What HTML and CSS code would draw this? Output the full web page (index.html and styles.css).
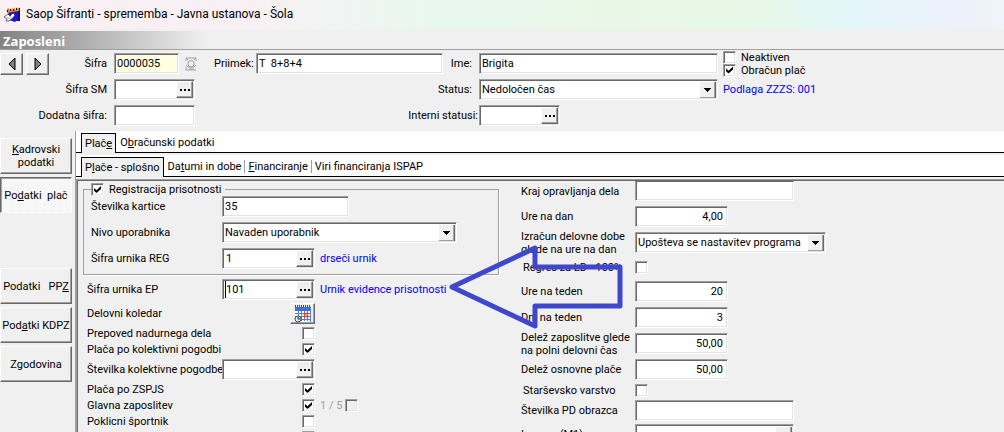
FILE: index.html
```html
<!DOCTYPE html>
<html lang="sl">
<head>
<meta charset="utf-8">
<title>Saop Šifranti - sprememba - Javna ustanova - Šola</title>
<link rel="stylesheet" href="styles.css">
</head>
<body>
<header class="titlebar">
  <svg class="app-icon" viewBox="0 0 16 16" aria-hidden="true">
    <path d="M4 4L15 3V14H12L11 15L5 13Z" fill="#1414e6"/>
    <path d="M3 4V2L5 1V3L7 1V3L9 1V3L11 0V3L13 0V2L15 0V4L3 6Z" fill="#e08a28"/>
    <path d="M3 3H4V5H3ZM6 2H7V4H6ZM9 2H10V4H9ZM12 1H13V3H12ZM15 1H16V14H14V4H15Z" fill="#181040"/>
    <path d="M0 10L4 7L6 9L9 6L11 8L9 11L5 14L2 14L3 12Z" fill="#fff" stroke="#223" stroke-width=".7"/>
    <path d="M3 10L6 12M5 9L8 11" stroke="#889" stroke-width=".7"/>
  </svg>
  <span>Saop Šifranti - sprememba - Javna ustanova - Šola</span>
</header>
<h1 class="band">Zaposleni</h1>

<form class="person">
  <div class="cell lead">
    <span class="nav">
      <button type="button" class="btn" aria-label="Prejšnji"><svg viewBox="0 0 18 18"><path d="M12 3V15L6 9Z" fill="#808080" stroke="#000"/></svg></button>
      <button type="button" class="btn" aria-label="Naslednji"><svg viewBox="0 0 18 18"><path d="M6 3V15L12 9Z" fill="#808080" stroke="#000"/></svg></button>
    </span>
    <label for="sifra">Šifra</label>
  </div>
  <div class="cell">
    <input id="sifra" class="field code" value="0000035">
  </div>
  <div class="cell surname">
    <svg class="stamp" viewBox="0 0 12 14" aria-hidden="true"><path d="M1 4V1H11V4M1 1L3 3M11 1L9 3M4 4H8L9 6V8L7 10H5L3 8V6ZM1 8L3 10H9L11 8M1 13H11M1 10V13M4 12H9" fill="none" stroke="#a0a0a0"/></svg>
    <label for="priimek">Priimek:</label>
    <input id="priimek" class="field grow" value="T  8+8+4">
  </div>
  <div class="cell end"><label for="ime">Ime:</label></div>
  <div class="cell"><input id="ime" class="field grow" value="Brigita"></div>
  <div class="cell flags">
    <label class="check"><input type="checkbox">Neaktiven</label>
    <label class="check"><input type="checkbox" checked>Obračun plač</label>
  </div>

  <div class="cell end"><label for="sm">Šifra SM</label></div>
  <div class="cell"><span class="field combo grow"><input id="sm"><button type="button" class="btn dots" aria-label="Izberi"></button></span></div>
  <div class="cell"></div>
  <div class="cell end"><label for="status">Status:</label></div>
  <div class="cell"><select id="status" class="field grow"><option>Nedoločen čas</option></select></div>
  <div class="cell info">Podlaga ZZZS: 001</div>

  <div class="cell end"><label for="dodatna">Dodatna šifra:</label></div>
  <div class="cell"><input id="dodatna" class="field grow"></div>
  <div class="cell"></div>
  <div class="cell end wide"><label for="interni">Interni statusi:</label></div>
  <div class="cell"><span class="field combo short"><input id="interni"><button type="button" class="btn dots" aria-label="Izberi"></button></span></div>
  <div class="cell"></div>
</form>

<div class="work">
  <nav class="side">
    <button type="button" class="btn"><span><u>K</u>adrovski<br>podatki</span></button>
    <button type="button" class="btn pressed"><span>Po<u>d</u>atki&nbsp; plač</span></button>
    <button type="button" class="btn after-gap"><span>Podatki &nbsp; PP<u>Z</u></span></button>
    <button type="button" class="btn"><span>Pod<u>a</u>tki KDPZ</span></button>
    <button type="button" class="btn"><span>Zgodovina</span></button>
  </nav>
  <main class="main">
    <div class="tabs" role="tablist">
      <button type="button" role="tab" class="tab active">Plač<u>e</u></button>
      <button type="button" role="tab" class="tab">O<u>b</u>računski podatki</button>
    </div>
    <div class="tabs" role="tablist">
      <button type="button" role="tab" class="tab active">P<u>l</u>ače - splošno</button>
      <button type="button" role="tab" class="tab">Da<u>t</u>umi in dobe</button>
      <button type="button" role="tab" class="tab split"><u>F</u>inanciranje</button>
      <button type="button" role="tab" class="tab split">Viri financiranja ISPAP</button>
    </div>
    <div class="pane">
      <div class="left">
        <fieldset class="group">
          <legend><label class="check"><input type="checkbox" checked>Registracija prisotnosti</label></legend>
          <div class="row"><label for="kartica">Številka kartice</label><input id="kartica" class="field w126" value="35"></div>
          <div class="row"><label for="nivo">Nivo uporabnika</label><select id="nivo" class="field w235"><option>Navaden uporabnik</option></select></div>
          <div class="row"><label for="reg">Šifra urnika REG</label><span class="field combo w92"><input id="reg" value="1"><button type="button" class="btn dots" aria-label="Izberi"></button></span><span class="info">drseči urnik</span></div>
        </fieldset>
        <div class="rows">
          <div class="row"><label for="ep">Šifra urnika EP</label><span class="field combo w92 focus"><input id="ep" value="101"><button type="button" class="btn dots" aria-label="Izberi"></button></span><span class="info">Urnik evidence prisotnosti</span></div>
          <div class="row"><span class="name">Delovni koledar</span><span class="slot"><button type="button" class="btn cal" aria-label="Koledar">
            <svg viewBox="0 0 18 18"><rect x="1" y="2" width="16" height="15" fill="#fff"/><rect x="1" y="2" width="16" height="4" fill="#3a6fd8"/><path d="M1 1H17" stroke="#802060" stroke-width="2" stroke-dasharray="1 1"/><path d="M1 8.500H17M1 11.500H17M1 14.500H17M4.500 6V16M7.500 6V16M10.500 6V16M13.500 6V16M16.500 3V17" stroke="#5080d0" fill="none"/><rect x="10.500" y="8.500" width="3" height="3" fill="#fff" stroke="#f04010" stroke-width="1.500"/><circle cx="4" cy="14" r="3" fill="#dfe8ee" stroke="#405060"/><path d="M4 12V14H6" stroke="#203040" fill="none"/></svg>
          </button></span></div>
          <div class="row low"><label for="c1">Prepoved nadurnega dela</label><span class="slot"><input id="c1" type="checkbox"></span></div>
          <div class="row low"><label for="c2">Plača po kolektivni pogodbi</label><span class="slot"><input id="c2" type="checkbox" checked></span></div>
          <div class="row"><label for="kp">Številka kolektivne pogodbe</label><span class="field combo w92"><input id="kp"><button type="button" class="btn dots" aria-label="Izberi"></button></span></div>
          <div class="row low"><label for="c3">Plača po ZSPJS</label><span class="slot"><input id="c3" type="checkbox" checked></span></div>
          <div class="row low"><label for="c4">Glavna zaposlitev</label><span class="slot"><input id="c4" type="checkbox" checked></span><label class="fraction">1 / 5 <input type="checkbox" disabled></label></div>
          <div class="row low"><label for="c5">Poklicni športnik</label><span class="slot"><input id="c5" type="checkbox"></span></div>
          <div class="row low"><span class="name"></span><span class="slot"><input type="checkbox" aria-label="Dodatno"></span></div>
        </div>
      </div>
      <div class="right">
        <div class="rows loose">
          <div class="row first"><label for="kraj">Kraj opravljanja dela</label><input id="kraj" class="field w158"></div>
          <div class="row"><label for="dan">Ure na dan</label><input id="dan" class="field num" value="4,00"></div>
          <div class="row"><label for="izr">Izračun delovne dobe<br>glede na ure na dan</label><select id="izr" class="field w191"><option>Upošteva se nastavitev programa</option></select></div>
          <div class="row mid"><label for="regres">Regres za LD - 100%</label><input id="regres" type="checkbox"></div>
          <div class="row"><label for="teden">Ure na teden</label><input id="teden" class="field num" value="20"></div>
          <div class="row"><label for="dni">Dni na teden</label><input id="dni" class="field num" value="3"></div>
          <div class="row"><label for="delez">Delež zaposlitve glede<br>na polni delovni čas</label><input id="delez" class="field num" value="50,00"></div>
          <div class="row"><label for="osn">Delež osnovne plače</label><input id="osn" class="field num" value="50,00"></div>
        </div>
        <div class="rows">
          <div class="row low"><label for="star">Starševsko varstvo</label><input id="star" type="checkbox"></div>
          <div class="row"><label for="pd">Številka PD obrazca</label><input id="pd" class="field w158"></div>
          <div class="row"><label for="m1">Izmena (M1)</label><select id="m1" class="field w158"><option></option></select></div>
        </div>
      </div>
      <svg class="arrow" viewBox="0 0 176 84" aria-hidden="true"><path d="M4 42L87 3V22H172V61H87V81Z" fill="none" stroke="#3f48cc" stroke-width="5" stroke-linejoin="round"/></svg>
    </div>
  </main>
</div>
</body>
</html>
```
FILE: styles.css
```css
* { box-sizing: border-box; }

body {
  margin: 0;
  height: 100vh;
  overflow: hidden;
  display: flex;
  flex-direction: column;
  background: #f0f0f0;
  color: #000;
  font: 11px/13px Roboto, "Open Sans", sans-serif;
}

input, select, button {
  font: inherit;
  color: inherit;
  margin: 0;
  padding: 0;
  border-radius: 0;
}

.titlebar {
  flex: none;
  display: flex;
  align-items: center;
  gap: 6px;
  height: 29px;
  padding-left: 4px;
  font-size: 12px;
  background: linear-gradient(90deg, #faf0f4 0%, #f8f0f4 25%, #e8f8f0 43%, #e9f8e6 60%, #e8f8e8 75%, #e2f6f8 84%, #ecf1fb 95%, #eef4f8 100%);
}
.app-icon { width: 16px; height: 16px; }

.band {
  flex: none;
  margin: 2px 0 0;
  padding-left: 3px;
  height: 19px;
  border-bottom: 1px solid #a0a0a0;
  background: linear-gradient(90deg, #828282, #f0f0f0 208px);
  color: #fff;
  font-family: "Open Sans", sans-serif;
  font-size: 13px;
  line-height: 21px;
}

.btn {
  display: flex;
  align-items: center;
  justify-content: center;
  background: #f0f0f0;
  border: 1px solid;
  border-color: #fff #696969 #696969 #fff;
  box-shadow: inset -1px -1px #a0a0a0;
}

.field {
  height: 21px;
  padding: 0 2px;
  background: #fff;
  border: 1px solid;
  border-color: #a0a0a0 #fff #fff #a0a0a0;
  box-shadow: inset 1px 1px #696969, inset -1px -1px #e3e3e3;
  outline: none;
  min-width: 0;
}
select.field {
  appearance: none;
  background:
    linear-gradient(#000, #000) no-repeat right 6px top 8px / 7px 1px,
    linear-gradient(#000, #000) no-repeat right 7px top 9px / 5px 1px,
    linear-gradient(#000, #000) no-repeat right 8px top 10px / 3px 1px,
    linear-gradient(#000, #000) no-repeat right 9px top 11px / 1px 1px,
    linear-gradient(#f0f0f0, #f0f0f0) no-repeat right 3px top 2px / 14px 15px,
    linear-gradient(#a0a0a0, #a0a0a0) no-repeat right 2px top 2px / 15px 16px,
    linear-gradient(#696969, #696969) no-repeat right 1px top 2px / 16px 17px,
    #fff;
}
.combo { display: flex; padding: 1px; }
.combo input {
  flex: 1;
  min-width: 0;
  padding-left: 2px;
  border: 0;
  outline: none;
  background: none;
}
.focus input { border-left: 1px solid #000; margin-left: 1px; padding-left: 0; }
.dots { width: 17px; }
.dots::before {
  content: "";
  width: 10px;
  height: 2px;
  background: repeating-linear-gradient(90deg, #000 0 2px, transparent 2px 4px);
}
.grow { flex: 1; }
.short { width: 81px; }
.w92 { width: 93px; }
.w126 { width: 127px; }
.w158 { width: 159px; }
.w191 { width: 191px; }
.w235 { width: 235px; }
.num { width: 93px; padding-right: 4px; text-align: right; }
.code { width: 65px; background: #ffffe1; }
.info { color: #0000ff; }

input[type="checkbox"] {
  appearance: none;
  flex: none;
  width: 13px;
  height: 13px;
  background: #fff;
  border: 1px solid;
  border-color: #a0a0a0 #fff #fff #a0a0a0;
  box-shadow: inset 1px 1px #696969, inset -1px -1px #e3e3e3;
  display: grid;
  place-items: center;
}
input[type="checkbox"]:checked::before {
  content: "";
  width: 7px;
  height: 7px;
  background: #000;
  clip-path: polygon(0 29%, 36% 62%, 100% 0, 100% 42%, 36% 100%, 0 68%);
}
input[type="checkbox"]:disabled { background: #f0f0f0; }
.check { display: flex; align-items: center; gap: 5px; }

.person {
  flex: none;
  display: grid;
  grid-template-columns: 107px 83px 246px 36px 239px 1fr;
  grid-auto-rows: 21px;
  gap: 5px 0;
  padding: 3px 0 5px;
}
.cell { display: flex; align-items: center; white-space: nowrap; min-width: 0; }
.cell:nth-child(6n + 2) { margin-left: 7px; margin-right: -5px; }
.cell:nth-child(6n + 5) { margin-left: 7px; margin-right: -7px; }
.cell:nth-child(6n + 6) { margin-left: 12px; }
.lead { justify-content: space-between; }
.nav { display: flex; gap: 3px; }
.nav .btn { width: 23px; height: 22px; }
.nav svg { width: 18px; height: 18px; flex: none; }
.end { justify-content: flex-end; }
.wide { margin-right: -6px; }
.surname { margin-left: -5px; margin-right: -7px; }
.surname label { width: 42px; margin-left: 17px; }
.stamp { width: 12px; height: 14px; }
.person .flags { flex-direction: column; align-items: flex-start; justify-content: center; }

.work { flex: 1; display: flex; min-height: 0; }
.side {
  flex: none;
  width: 75px;
  padding: 7px 3px 0 0;
  display: flex;
  flex-direction: column;
  gap: 3px;
}
.side .btn { height: 36px; text-align: center; flex: none; white-space: nowrap; }
.side .pressed {
  background: repeating-conic-gradient(#fff 0 25%, #f0f0f0 0 50%) 0 0 / 2px 2px;
  border-color: #696969 #fff #fff #696969;
  box-shadow: inset 1px 1px #a0a0a0;
}
.side .after-gap { margin-top: 52px; }

.main { flex: 1; display: flex; flex-direction: column; min-width: 0; border-left: 1px solid #a0a0a0; }
.tabs {
  flex: none;
  display: flex;
  height: 22px;
  margin-bottom: 2px;
  padding: 2px 0 0 5px;
  background: #fff;
  border-bottom: 1px solid #000;
}
.tab {
  height: 19px;
  padding: 0 3px 0 4px;
  border: 0;
  background: none;
  white-space: nowrap;
}
.tab.active {
  height: 20px;
  padding: 0 3px;
  background: #f0f0f0;
  border: 1px solid #000;
  border-bottom: 0;
}
.tab.split { background: linear-gradient(#a0a0a0, #a0a0a0) no-repeat 0 3px / 1px 13px; }

.pane {
  flex: 1;
  min-height: 0;
  position: relative;
  display: flex;
  border: 1px solid #a0a0a0;
  border-width: 1px 0 0 1px;
  box-shadow: inset 1px 1px #696969;
}
.left { flex: none; width: 444px; padding: 3px 0 0 6px; }
.right { flex: 1; padding-top: 1px; }
.group {
  width: 416px;
  margin: 0 0 4px;
  padding: 0 0 5px 7px;
  border: 1px solid #a0a0a0;
  box-shadow: 1px 1px #fff;
  display: flex;
  flex-direction: column;
  gap: 5px;
}
.group legend { padding: 0 4px 0 0; }
.group .row label { width: 131px; }
.rows { display: flex; flex-direction: column; gap: 3px; }
.row { flex: none; display: flex; align-items: center; height: 21px; }
.row .info { margin-left: 5px; }
.left .rows { padding-left: 4px; }
.left .rows .row > label:first-child, .name { width: 135px; flex: none; white-space: nowrap; }
.low { height: 13px; }
.slot { width: 93px; display: flex; justify-content: flex-end; }
.cal { width: 25px; height: 21px; }
.cal svg { width: 18px; height: 18px; flex: none; }
.fraction { display: flex; align-items: center; gap: 3px; margin-left: 5px; color: #a0a0a0; }
.right .row label { width: 114px; flex: none; white-space: nowrap; }
.rows.loose { gap: 5px; margin-bottom: 4px; }
.mid { height: 18px; }
.first, .first .field { height: 20px; }
.first .field { border-top-color: #696969; box-shadow: inset 1px 0 #696969, inset -1px -1px #e3e3e3; }
.right .row label[for="regres"], .right .row label[for="star"] { padding-left: 2px; }

.arrow { position: absolute; left: 371px; top: 65px; width: 176px; height: 84px; }
```
